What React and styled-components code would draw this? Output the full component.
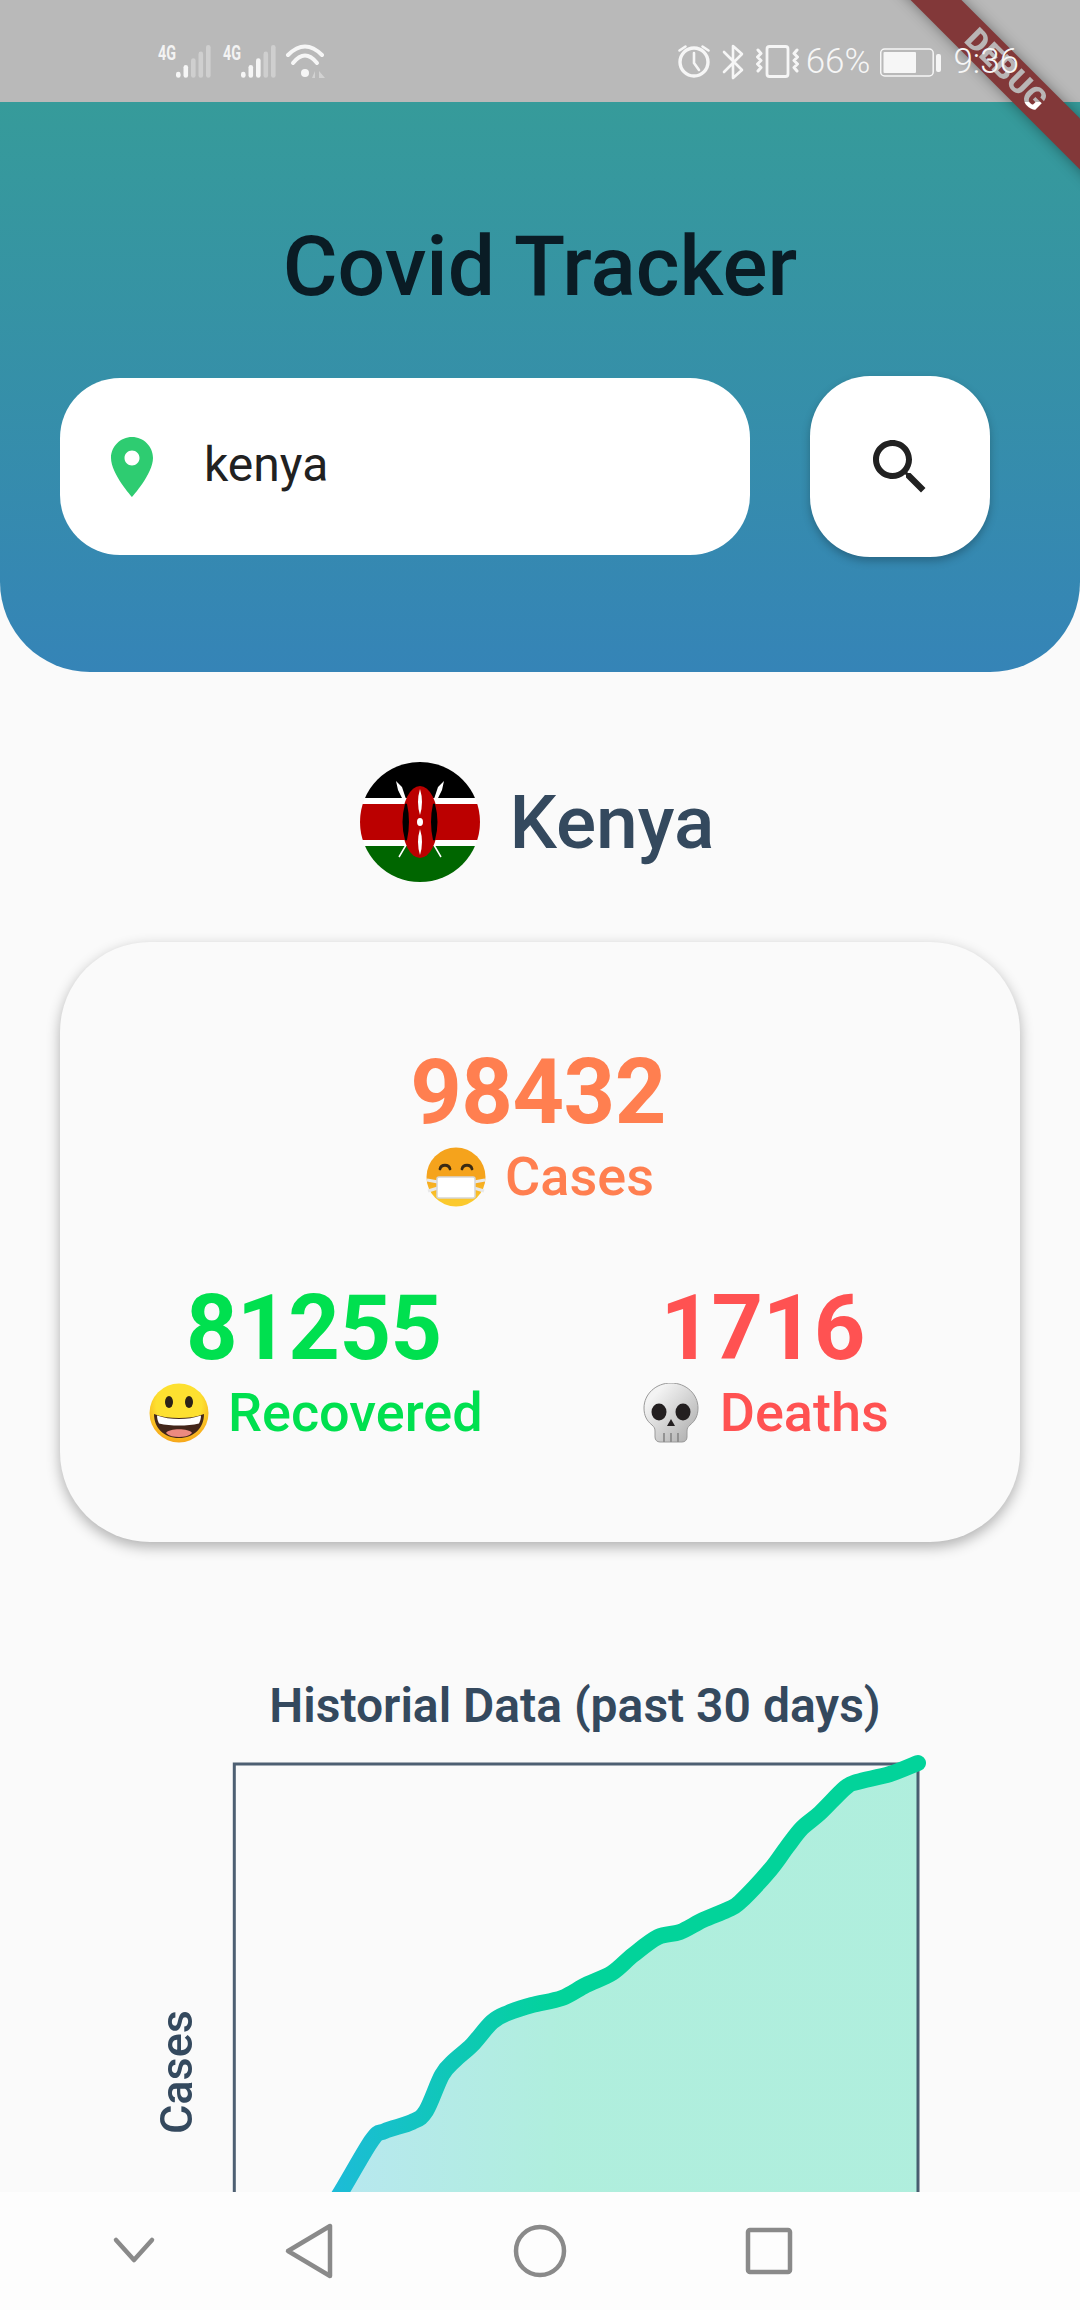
import React from 'react'
import styled, { createGlobalStyle } from 'styled-components'

const GlobalStyle = createGlobalStyle`
  html, body {
    margin: 0;
    padding: 0;
    width: 1080px;
    height: 2310px;
    overflow: hidden;
    background: #fafafa;
    font-family: Roboto, "Liberation Sans", sans-serif;
  }
  * { box-sizing: border-box; }
`

const Shell = styled.div`
  position: relative;
  width: 1080px;
  height: 2310px;
  display: flex;
  flex-direction: column;
  overflow: hidden;
  background: linear-gradient(#b9b9b9 0 102px, #fafafa 102px);
`

const Ribbon = styled.div`
  position: absolute;
  left: 856px;
  top: 52px;
  width: 300px;
  height: 36px;
  z-index: 1;
  display: flex;
  align-items: center;
  justify-content: center;
  background: #823839;
  box-shadow: 0 0 14px rgba(0, 0, 0, 0.38);
  transform: rotate(45deg);
`

const RibbonText = styled.span`
  font-size: 31px;
  font-weight: 900;
  line-height: 36px;
  letter-spacing: 0.5px;
  color: transparent;
  background: linear-gradient(135deg, #b9b5b5 calc(50% + 32px), #ffffff calc(50% + 32px));
  -webkit-background-clip: text;
  background-clip: text;
`

const StatusBar = styled.div`
  position: relative;
  z-index: 2;
  height: 102px;
  flex: none;
  padding: 22px 61px 0 150px;
  display: flex;
  align-items: center;
  justify-content: space-between;
`

const StatusGroup = styled.div`
  display: flex;
  align-items: center;
  gap: ${p => p.$gap || 0}px;
`

const StatusText = styled.span`
  font-size: 35px;
  font-weight: 300;
  line-height: 40px;
  color: #f6f6f6;
`

const Content = styled.main`
  flex: 1;
  min-height: 0;
  overflow: hidden;
`

const Header = styled.header`
  height: 570px;
  padding: 116px 60px 0;
  background: linear-gradient(#369b9a, #3584b7);
  border-radius: 0 0 90px 90px;
`

const Title = styled.h1`
  margin: 0 0 60px;
  font-size: 84px;
  font-weight: 500;
  line-height: 98px;
  text-align: center;
  color: #0a1c25;
`

const SearchRow = styled.div`
  display: flex;
  align-items: center;
  gap: 60px;
`

const SearchBox = styled.label`
  width: 690px;
  height: 177px;
  padding-left: 36px;
  display: flex;
  align-items: center;
  gap: 36px;
  background: #fff;
  border-radius: 60px;
`

const SearchInput = styled.input`
  flex: 1;
  min-width: 0;
  border: 0;
  outline: 0;
  padding: 0 0 4px;
  background: transparent;
  font-family: inherit;
  font-size: 48px;
  color: #212121;
`

const SearchButton = styled.button`
  width: 180px;
  height: 181px;
  padding: 0;
  border: 0;
  display: flex;
  align-items: center;
  justify-content: center;
  background: #fff;
  border-radius: 60px;
  box-shadow: 0 4px 8px rgba(0, 0, 0, 0.25);
`

const CountryRow = styled.div`
  margin-top: 90px;
  display: flex;
  align-items: center;
  justify-content: center;
  gap: 30px;
  padding-right: 6px;
`

const CountryName = styled.h2`
  margin: 0;
  font-size: 75px;
  font-weight: 500;
  line-height: 84px;
  color: #34495e;
`

const Card = styled.section`
  margin: 60px 60px 0;
  height: 600px;
  padding-top: 106px;
  background: #fafafa;
  border-radius: 90px;
  box-shadow: 0 5px 14px rgba(0, 0, 0, 0.3);
`

const StatRow = styled.div`
  display: flex;
  justify-content: ${p => (p.$split ? 'flex-start' : 'center')};
  gap: 158px;
  padding-left: ${p => (p.$split ? 89 : 0)}px;
  margin-top: ${p => (p.$split ? 77 : 0)}px;
`

const Stat = styled.div`
  display: flex;
  flex-direction: column;
  align-items: center;
  gap: 9px;
  color: ${p => p.$color};
`

const StatValue = styled.div`
  padding-right: 4px;
  font-size: 90px;
  font-weight: 700;
  line-height: 90px;
  letter-spacing: -0.5px;
`

const StatLabel = styled.div`
  display: flex;
  align-items: center;
  gap: 19px;
  font-size: 54px;
  font-weight: 500;
  line-height: 60px;
`

const ChartSection = styled.section`
  margin-top: 136px;
`

const ChartTitle = styled.h3`
  margin: 0 0 16px;
  padding-left: 70px;
  font-size: 48px;
  font-weight: 600;
  line-height: 56px;
  text-align: center;
  color: #34495e;
`

const ChartBody = styled.div`
  display: flex;
  align-items: center;
  padding-left: 154px;
  gap: 25px;
`

const AxisLabel = styled.span`
  writing-mode: vertical-rl;
  transform: rotate(180deg);
  margin-top: 14px;
  font-size: 45px;
  font-weight: 500;
  line-height: 46px;
  color: #34495e;
`

const NavBar = styled.nav`
  flex: none;
  height: 118px;
  padding: 29px 0 0 104px;
  display: flex;
  align-items: flex-start;
  gap: 115px;
  background: #fdfdfd;
`

const NavGroup = styled.div`
  display: flex;
  gap: 170px;
`

const NavIcon = styled.svg`
  width: 60px;
  height: 60px;
  display: block;
  fill: none;
  stroke: #8a8a8a;
  stroke-width: 4.5;
  stroke-linecap: round;
  stroke-linejoin: round;
`

const STATS = {
  cases: '#ff7f50',
  recovered: '#00e04f',
  deaths: '#ff5252',
}

// centre line of the cases curve, read off the screenshot in page pixels
const CURVE = [
  [300, 2258], [341, 2192], [372, 2140], [385, 2131], [412, 2122], [426, 2111], [442, 2075], [455, 2060],
  [472, 2045], [492, 2022], [508, 2013], [532, 2005], [562, 1998], [586, 1985], [612, 1973],
  [633, 1955], [658, 1937], [680, 1932], [703, 1920], [727, 1910], [740, 1902], [770, 1870],
  [787, 1847], [802, 1828], [820, 1813], [845, 1788], [857, 1782], [890, 1774], [918, 1763],
]

const smoothPath = pts => {
  let d = `M${pts[0][0]} ${pts[0][1]}`
  for (let i = 0; i < pts.length - 1; i++) {
    const p0 = pts[i - 1] || pts[i]
    const p1 = pts[i]
    const p2 = pts[i + 1]
    const p3 = pts[i + 2] || p2
    const c1x = p1[0] + (p2[0] - p0[0]) / 6
    const c1y = p1[1] + (p2[1] - p0[1]) / 6
    const c2x = p2[0] - (p3[0] - p1[0]) / 6
    const c2y = p2[1] - (p3[1] - p1[1]) / 6
    d += ` C${c1x} ${c1y} ${c2x} ${c2y} ${p2[0]} ${p2[1]}`
  }
  return d
}

const curvePath = smoothPath(CURVE)

const SignalIcon = ({ x, lit }) => (
  <g>
    <text x={x} y="60" fontSize="21" fontWeight="700" fill="#f3f3f3" textLength="18" lengthAdjust="spacingAndGlyphs">4G</text>
    {[0, 1, 2, 3, 4].map(i => (
      <rect
        key={i}
        x={x + 18 + i * 7.5}
        y={71.7 - i * 6.7}
        width="4.6"
        height={6 + i * 6.7}
        rx="2.3"
        fill={i < lit ? '#f6f6f6' : '#cfcfcf'}
      />
    ))}
  </g>
)

const LeftStatusIcons = () => (
  <svg width="180" height="40" viewBox="150 42 180 40">
    <SignalIcon x={158} lit={2} />
    <SignalIcon x={223} lit={3} />
    <g fill="none" stroke="#f6f6f6" strokeWidth="4" strokeLinecap="round">
      <path d="M288 55 Q305 38 322 55" />
      <path d="M293 63 Q305 48 317 63" />
    </g>
    <circle cx="305" cy="73" r="4" fill="#f6f6f6" />
    <path d="M315 71l-3 7h3zM319 71v7h6z" fill="#d2d2d2" />
  </svg>
)

const DeviceIcons = () => (
  <svg width="126" height="40" viewBox="676 42 126 40" fill="none" stroke="#f6f6f6" strokeLinecap="round" strokeLinejoin="round">
    <circle cx="694" cy="62" r="14" strokeWidth="3.4" />
    <path d="M694 53v10l5 7" strokeWidth="2.6" />
    <path d="M679.5 50.5l6-4M708.5 50.5l-6-4" strokeWidth="2.6" />
    <path d="M724 52l18 18-9 8V46l9 8-18 18" strokeWidth="2.6" />
    <rect x="767" y="46.5" width="21" height="30" rx="2.5" strokeWidth="2.8" />
    <path d="M758 50l3 3.5-3.5 3.5 3.5 3.5-3.5 3.5 3.5 3.5-3 3.5M797 50l-3 3.5 3.5 3.5-3.5 3.5 3.5 3.5-3.5 3.5 3 3.5" strokeWidth="3" />
  </svg>
)

const BatteryIcon = () => (
  <svg width="61" height="40" viewBox="880 42 61 40">
    <rect x="880.7" y="49" width="52.5" height="27" rx="4" fill="none" stroke="#f6f6f6" strokeWidth="1.5" />
    <rect x="883.5" y="52" width="32.5" height="21" rx="1" fill="#f6f6f6" />
    <rect x="936" y="54" width="5" height="18" rx="2" fill="#f6f6f6" />
  </svg>
)

const PlaceIcon = () => (
  <svg width="72" height="72" viewBox="0 0 24 24" fill="#2ecc71" style={{ flex: 'none' }}>
    <path d="M12 2C8.13 2 5 5.13 5 9c0 5.25 7 13 7 13s7-7.75 7-13c0-3.87-3.13-7-7-7zm0 9.5c-1.38 0-2.5-1.12-2.5-2.5s1.12-2.5 2.5-2.5 2.5 1.12 2.5 2.5-1.12 2.5-2.5 2.5z" />
  </svg>
)

const SearchIcon = () => (
  <svg width="72" height="72" viewBox="0 0 24 24" fill="#212121">
    <path d="M15.5 14h-.79l-.28-.27C15.41 12.59 16 11.11 16 9.5 16 5.91 13.09 3 9.5 3S3 5.91 3 9.5 5.91 16 9.5 16c1.61 0 3.09-.59 4.23-1.57l.27.28v.79l5 4.99L20.49 19l-4.99-5zm-6 0C7.01 14 5 11.99 5 9.5S7.01 5 9.5 5 14 7.01 14 9.5 11.99 14 9.5 14z" />
  </svg>
)

const KenyaFlag = () => (
  <svg width="120" height="120" viewBox="0 0 120 120">
    <defs>
      <clipPath id="flagClip"><circle cx="60" cy="60" r="60" /></clipPath>
    </defs>
    <g clipPath="url(#flagClip)">
      <rect width="120" height="36" fill="#000" />
      <rect y="36" width="120" height="6" fill="#fff" />
      <rect y="42" width="120" height="36" fill="#bb0000" />
      <rect y="78" width="120" height="6" fill="#fff" />
      <rect y="84" width="120" height="36" fill="#006600" />
      <path d="M36 19l6 6 4 12-3 1-5-10zM84 19l-6 6-4 12 3 1 5-10z" fill="#fff" />
      <path d="M39 95L49 78M81 95L71 78" stroke="#fff" strokeWidth="1.5" />
      <ellipse cx="60" cy="60" rx="18" ry="36" fill="#bb0000" />
      <path d="M46 42Q41 60 46 78Q50 60 46 42zM74 42Q79 60 74 78Q70 60 74 42z" fill="#000" stroke="#000" strokeWidth="2" />
      <path d="M60 27Q56 40 60 53Q64 40 60 27zM60 67Q56 80 60 93Q64 80 60 67z" fill="#fff" />
      <ellipse cx="60" cy="60" rx="3" ry="4" fill="#fff" />
    </g>
  </svg>
)

const MaskEmoji = () => (
  <svg width="60" height="60" viewBox="0 0 60 60" style={{ flex: 'none' }}>
    <defs>
      <linearGradient id="maskFace" x1="0" y1="0" x2="0" y2="1">
        <stop offset="0.5" stopColor="#f5a31c" />
        <stop offset="0.9" stopColor="#fbc92d" />
      </linearGradient>
    </defs>
    <circle cx="30" cy="30" r="29.5" fill="url(#maskFace)" />
    <path d="M14 22c1-5 9-5 10 0M36 22c1-5 9-5 10 0" fill="none" stroke="#3a2a14" strokeWidth="2.8" strokeLinecap="round" />
    <path d="M1 33l11 2M59 33l-11 2M2 44l10-3M58 44l-10-3" stroke="#e8e8e8" strokeWidth="3" />
    <rect x="11" y="30" width="38" height="21" rx="2" fill="#fff" stroke="#d6d6d6" strokeWidth="1.5" />
  </svg>
)

const GrinEmoji = () => (
  <svg width="60" height="60" viewBox="0 0 60 60" style={{ flex: 'none' }}>
    <defs>
      <radialGradient id="grinFace" cx="0.5" cy="0.35" r="0.7">
        <stop offset="0.55" stopColor="#fde030" />
        <stop offset="1" stopColor="#f59a16" />
      </radialGradient>
    </defs>
    <circle cx="30" cy="30" r="29.5" fill="url(#grinFace)" />
    <ellipse cx="20" cy="19" rx="4" ry="6" fill="#2b2118" />
    <ellipse cx="40" cy="19" rx="4" ry="6" fill="#2b2118" />
    <path d="M5 31c8 3 16 4 25 4s17-1 25-4c0 14-10 24-25 24S5 45 5 31z" fill="#43261a" />
    <path d="M8 32.5c7 2.5 14 3.5 22 3.5s15-1 22-3.5c0 3-1 6-2 8-6 1.5-13 2-20 2s-14-.5-20-2c-1-2-2-5-2-8z" fill="#fff" />
    <path d="M17 50c3-5 23-5 26 0-3 3-8 4-13 4s-10-1-13-4z" fill="#ec8a80" />
  </svg>
)

const SkullEmoji = () => (
  <svg width="60" height="60" viewBox="0 0 60 60" style={{ flex: 'none' }}>
    <defs>
      <linearGradient id="skullBone" x1="0" y1="0" x2="1" y2="1">
        <stop offset="0.2" stopColor="#f3f3f3" />
        <stop offset="1" stopColor="#a8a8a8" />
      </linearGradient>
    </defs>
    <path d="M30 0C15 0 3 11 3 25c0 8 3 13 8 17 2 2 3 3 3 6v6c0 3 2 5 5 5h22c3 0 5-2 5-5v-6c0-3 1-4 3-6 5-4 8-9 8-17C57 11 45 0 30 0z" fill="url(#skullBone)" stroke="#9a9a9a" strokeWidth="1" />
    <ellipse cx="18" cy="29" rx="7.5" ry="8.5" fill="#231f20" />
    <ellipse cx="42" cy="29" rx="7.5" ry="8.5" fill="#231f20" />
    <path d="M30 36l-4 7h8z" fill="#231f20" />
    <path d="M23 50v9M30 50v9M37 50v9" stroke="#8d8d8d" strokeWidth="1.8" />
  </svg>
)

const CasesChart = () => (
  <svg width="710" height="630" viewBox="225 1750 710 630" style={{ flex: 'none' }}>
    <defs>
      <linearGradient id="curveStroke" gradientUnits="userSpaceOnUse" x1="280" y1="0" x2="560" y2="0">
        <stop offset="0" stopColor="#23b6e6" />
        <stop offset="1" stopColor="#02d39a" />
      </linearGradient>
    </defs>
    <path d={`${curvePath} L918 2380 L234 2380 Z`} fill="url(#curveStroke)" opacity="0.3" />
    <path d="M234.3 2380V1764H918V2380" fill="none" stroke="#34495e" strokeOpacity="0.88" strokeWidth="3" />
    <path d={curvePath} fill="none" stroke="url(#curveStroke)" strokeWidth="16" strokeLinecap="round" strokeLinejoin="round" />
  </svg>
)

const Stats = ({ color, value, label, emoji }) => (
  <Stat $color={color}>
    <StatValue>{value}</StatValue>
    <StatLabel>
      {emoji}
      {label}
    </StatLabel>
  </Stat>
)

const App = () => (
  <Shell>
    <GlobalStyle />
    <Ribbon>
      <RibbonText>DEBUG</RibbonText>
    </Ribbon>
    <StatusBar>
      <LeftStatusIcons />
      <StatusGroup $gap={4}>
        <DeviceIcons />
        <StatusGroup $gap={10}>
          <StatusText>66%</StatusText>
          <StatusGroup $gap={12}>
            <BatteryIcon />
            <StatusText>9:36</StatusText>
          </StatusGroup>
        </StatusGroup>
      </StatusGroup>
    </StatusBar>
    <Content>
      <Header>
        <Title>Covid Tracker</Title>
        <SearchRow>
          <SearchBox>
            <PlaceIcon />
            <SearchInput defaultValue="kenya" />
          </SearchBox>
          <SearchButton aria-label="Search">
            <SearchIcon />
          </SearchButton>
        </SearchRow>
      </Header>
      <CountryRow>
        <KenyaFlag />
        <CountryName>Kenya</CountryName>
      </CountryRow>
      <Card>
        <StatRow>
          <Stats color={STATS.cases} value="98432" label="Cases" emoji={<MaskEmoji />} />
        </StatRow>
        <StatRow $split>
          <Stats color={STATS.recovered} value="81255" label="Recovered" emoji={<GrinEmoji />} />
          <Stats color={STATS.deaths} value="1716" label="Deaths" emoji={<SkullEmoji />} />
        </StatRow>
      </Card>
      <ChartSection>
        <ChartTitle>Historial Data (past 30 days)</ChartTitle>
        <ChartBody>
          <AxisLabel>Cases</AxisLabel>
          <CasesChart />
        </ChartBody>
      </ChartSection>
    </Content>
    <NavBar>
      <NavIcon viewBox="0 0 60 60">
        <path d="M12 19l18 20 18-20" />
      </NavIcon>
      <NavGroup>
        <NavIcon viewBox="0 0 60 60">
          <path d="M9 30L51 5v50z" />
        </NavIcon>
        <NavIcon viewBox="0 0 60 60">
          <circle cx="31" cy="30" r="24" />
        </NavIcon>
        <NavIcon viewBox="0 0 60 60">
          <rect x="9" y="9" width="42" height="42" rx="2" />
        </NavIcon>
      </NavGroup>
    </NavBar>
  </Shell>
)

export default App
